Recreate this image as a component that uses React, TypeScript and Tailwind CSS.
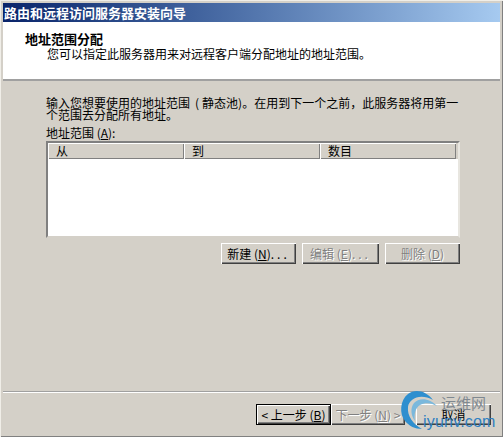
import React from "react";

const font = { fontFamily: '"Noto Sans CJK SC", "Liberation Sans", sans-serif' };

const Btn = ({ label, width, disabled, active }: { label: React.ReactNode; width: string; disabled?: boolean; active?: boolean }) => (
  <div
    className={`${width} h-[21px] flex items-center justify-center bg-[#d4d0c8] text-[12px] leading-none whitespace-pre ${
      active ? "border border-black" : ""
    } ${
      disabled
        ? "text-[#808080] [text-shadow:1px_1px_0_#fff]"
        : "text-black"
    } shadow-[inset_1px_1px_0_#fff,inset_-1px_-1px_0_#404040,inset_-2px_-2px_0_#808080]`}
  >
    {label}
  </div>
);

const Col = ({ label, width }: { label: string; width: string }) => (
  <div className={`${width} h-full flex items-center pl-2 text-[12px] leading-none shadow-[inset_1px_1px_0_#fff,inset_-1px_-1px_0_#808080]`}>{label}</div>
);

export default function App() {
  return (
    <div
      className="relative w-[503px] h-[437px] overflow-hidden bg-[#d4d0c8] p-[3px] text-black flex flex-col shadow-[inset_1px_1px_0_#f0eee8,inset_-1px_-1px_0_#808080]"
      style={font}
    >
      <div className="h-[19px] shrink-0 flex items-center pl-[1px] bg-gradient-to-r from-[#0a246a] to-[#a6caf0] text-white font-bold text-[13px] leading-none">
        路由和远程访问服务器安装向导
      </div>
      <div className="h-[59px] shrink-0 bg-white border-b-2 border-b-[#a0a0a0] pt-[9px] pl-[22px] text-[12px] leading-[15px]">
        <div className="font-bold text-[13px]">地址范围分配</div>
        <div className="pl-[22px]">您可以指定此服务器用来对远程客户端分配地址的地址范围。</div>
      </div>
      <div className="flex-1 flex flex-col pl-[43px] pt-[16px]">
        <div className="w-[420px] text-[12px] leading-[12px]">
          <div className="whitespace-pre">
            输入您想要使用的地址范围<span className="ml-[5px]">(</span>
            <span className="ml-[3px]">静态池</span>
            <span>)</span>
            <span>。</span>
            在用到下一个之前{"\uFF0C"}此服务器将用第一
          </div>
          <div>个范围去分配所有地址。</div>
        </div>
        <div className="mt-[5px] text-[12px] leading-[14px]">
          地址范围 (<u>A</u>):
        </div>
        <div className="mt-[1px] w-[414px] h-[97px] bg-white border-2 border-t-[#808080] border-l-[#808080] border-b-[#d4d0c8] border-r-[#e8e6e0]">
          <div className="h-[16px] flex bg-[#d4d0c8]">
            <Col label="从" width="w-[136px]" />
            <Col label="到" width="w-[136px]" />
            <Col label="数目" width="w-[136px]" />
          </div>
        </div>
        <div className="mt-[5px] w-[414px] flex justify-end gap-[6px]">
          <Btn label={<span>新建 (<u>N</u>)<span className="tracking-[3px]">...</span></span>} width="w-[75px]" />
          <Btn label={<span>编辑 (<u>E</u>)<span className="tracking-[3px]">...</span></span>} width="w-[77px]" disabled />
          <Btn label={<span>删除 (<u>D</u>)</span>} width="w-[75px]" disabled />
        </div>
      </div>
      <div className="h-[2px] shrink-0 mb-[11px] bg-[#a0a0a0] border-b border-b-white" />
      <div className="shrink-0 h-[21px] mb-[9px] flex pl-[253px]">
        <Btn label={<span>&lt; 上一步 (<u>B</u>)</span>} width="w-[75px]" active />
        <Btn label={<span>下一步 (<u>N</u>) &gt;</span>} width="w-[74px]" disabled />
        <div className="w-[11px]" />
        <Btn label="取消" width="w-[75px]" />
      </div>

      {/* watermark */}
      <div className="absolute left-[397px] top-[388px] w-[104px] h-[46px] pointer-events-none">
        <svg className="absolute left-0 top-0" width="50" height="46" viewBox="0 0 50 46">
          <path d="M36 12 C30 3 18 0 11 6 C3 12 2 26 8 33 C12 38 18 41 25 41 C16 36 10 28 11 19 C12 10 24 5 36 12 Z" fill="#2f8fcf" />
          <path d="M40 18 C33 10 22 9 17 15 C13 20 14 28 18 33 C17 27 18 20 23 17 C28 14 35 15 40 18 Z" fill="#7ab8dc" />
        </svg>
        <div className="absolute left-[44px] top-[6px] text-[15px] leading-[18px] text-[#7f8890]">运维网</div>
        <div className="absolute left-[26px] top-[25px] text-[16px] leading-[18px] tracking-[0.2px] text-[#2f7fc0]" style={{ fontFamily: '"Liberation Sans", sans-serif' }}>
          iyunv.com
        </div>
      </div>
    </div>
  );
}
